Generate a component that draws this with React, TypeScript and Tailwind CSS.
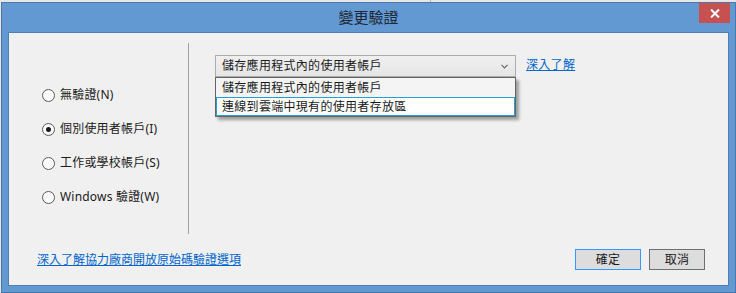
import React from "react";

const font = { fontFamily: "'Noto Sans','Noto Sans CJK TC',sans-serif" };

function Radio({ label, checked }: { label: string; checked?: boolean }) {
  return (
    <div className="flex h-[20px] items-center">
      <div className="flex h-[13px] w-[13px] items-center justify-center rounded-full border border-[#5a5a5a] bg-[#fbfbfb]">
        {checked && <div className="h-[5px] w-[5px] rounded-full bg-[#1a1a1a]" />}
      </div>
      <span className="ml-[5px] text-[12px] leading-[16px] tracking-[0.2px] text-[#1a1a1a]">{label}</span>
    </div>
  );
}

export default function App() {
  return (
    <div className="relative h-[293px] w-[736px] overflow-hidden bg-[#e6e6e6]" style={font}>
      <div className="absolute left-[430px] top-0 h-[2px] w-px bg-[#b8b8b8]" />
      <div className="ml-[1px] mt-[2px] flex h-[291px] w-[735px] flex-col border border-[#4a78aa] bg-[#6399d3]">
        <div className="relative flex h-[29px] shrink-0 items-center justify-center">
          <span className="-mt-[2px] text-[15px] leading-[20px] text-[#1e2733]">變更驗證</span>
          <div className="absolute right-[5px] top-0 flex h-[20px] w-[31px] items-center justify-center bg-[#c75050]">
            <svg width="10" height="9" viewBox="0 0 10 9">
              <path d="M1 0.5 L9 8.5 M9 0.5 L1 8.5" stroke="#ffffff" strokeWidth="2" />
            </svg>
          </div>
        </div>
        <div className="mx-[6px] mb-[6px] flex flex-1 flex-col border border-[#4f7eb3] bg-[#f0f0f0]">
          <div className="flex h-[201px] pt-[10px]">
            <div className="flex w-[179px] flex-col gap-[14px] pl-[33px] pt-[42px]">
              <Radio label="無驗證(N)" />
              <Radio label="個別使用者帳戶(I)" checked />
              <Radio label="工作或學校帳戶(S)" />
              <Radio label="Windows 驗證(W)" />
            </div>
            <div className="h-[191px] w-px bg-[#a0a0a0]" />
            <div className="flex pl-[26px] pt-[12px]">
              <div className="relative h-[22px]">
                <div className="flex h-[22px] w-[301px] items-center border border-[#acacac] bg-gradient-to-b from-[#f0f0f0] to-[#e5e5e5] pl-[6px]">
                  <span className="flex-1 text-[12px] leading-[16px] tracking-[0.3px] text-[#1a1a1a]">儲存應用程式內的使用者帳戶</span>
                  <svg className="mr-[7px]" width="7" height="5" viewBox="0 0 7 5">
                    <path d="M0.5 0.8 L3.5 3.8 L6.5 0.8" stroke="#6a6a6a" strokeWidth="1.2" fill="none" />
                  </svg>
                </div>
                <div className="absolute left-0 top-[22px] z-10 flex h-[40px] w-[301px] flex-col border border-[#646464] bg-[#f4f4f4] shadow-[3px_3px_3px_rgba(0,0,0,0.35)]">
                  <div className="flex h-[19px] items-center pl-[6px] text-[12px] leading-[16px] tracking-[0.3px] text-[#1a1a1a]">
                    儲存應用程式內的使用者帳戶
                  </div>
                  <div className="flex h-[19px] items-center border border-[#26a0da] bg-white pl-[5px] text-[12px] leading-[16px] tracking-[0.3px] text-[#1a1a1a]">
                    連線到雲端中現有的使用者存放區
                  </div>
                </div>
              </div>
              <a className="ml-[10px] mt-[2px] h-[18px] text-[12px] leading-[16px] tracking-[0.3px] text-[#0066cc] underline">深入了解</a>
            </div>
          </div>
          <div className="flex items-center justify-between pl-[28px] pr-[23px] pt-[15px]">
            <a className="text-[12px] leading-[16px] text-[#0066cc] underline">深入了解協力廠商開放原始碼驗證選項</a>
            <div className="flex gap-[8px]">
              <div className="flex h-[21px] w-[66px] items-center justify-center border border-[#3399ff] bg-[#dddddd] text-[12px] leading-[16px] tracking-[0.3px] text-[#1a1a1a]">
                確定
              </div>
              <div className="flex h-[21px] w-[56px] items-center justify-center border border-[#707070] bg-[#dddddd] text-[12px] leading-[16px] tracking-[0.3px] text-[#1a1a1a]">
                取消
              </div>
            </div>
          </div>
        </div>
      </div>
    </div>
  );
}
